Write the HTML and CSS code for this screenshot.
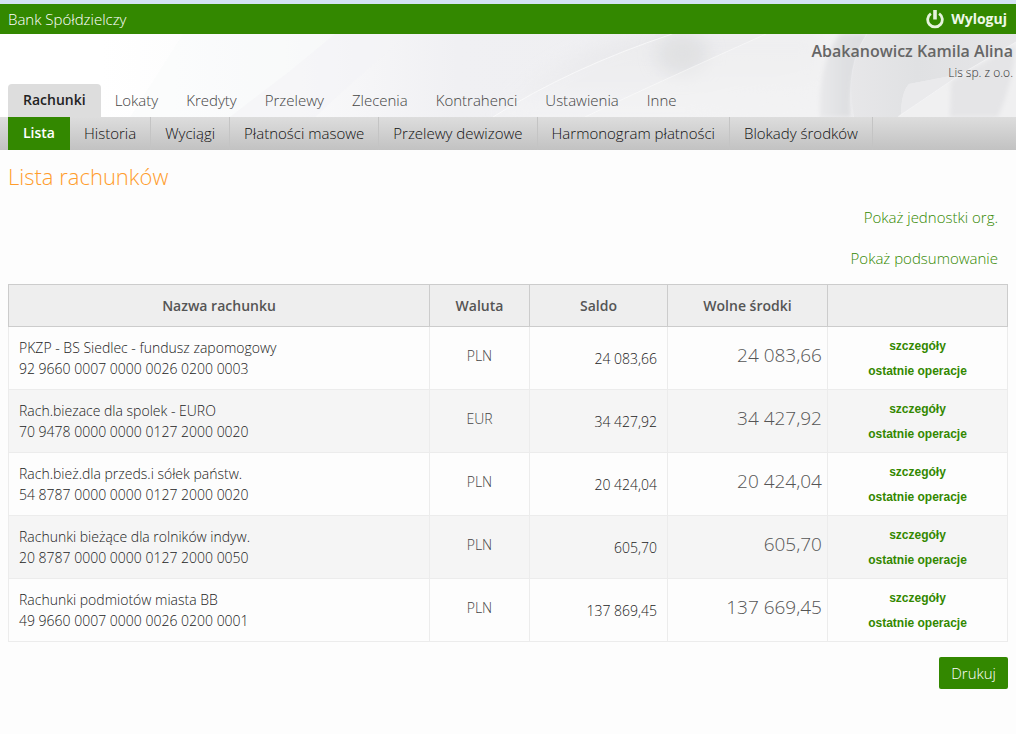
FILE: index.html
```html
<!DOCTYPE html>
<html lang="pl">
<head>
<meta charset="utf-8">
<title>Lista rachunków</title>
<link rel="stylesheet" href="styles.css">
</head>
<body>
<div class="topbar">
  <span class="bank">Bank Spółdzielczy</span>
  <a class="logout" href="#">
    <svg class="power" viewBox="0 0 18 19" aria-hidden="true"><path d="M4.900 3.600A7.300 7.300 0 1 0 13.100 3.600" fill="none" stroke="#e6f3dd" stroke-width="2.800"/><path d="M9 0V9.500" stroke="#e6f3dd" stroke-width="3.600"/></svg>
    <span>Wyloguj</span>
  </a>
</div>
<header class="header">
  <svg class="art" viewBox="0 0 1016 83" preserveAspectRatio="none" aria-hidden="true">
    <defs>
      <linearGradient id="base" x1="0" x2="1" y1="0" y2="0"><stop offset="0" stop-color="#fff"/><stop offset=".1" stop-color="#fff"/><stop offset=".28" stop-color="#fafafb"/><stop offset=".45" stop-color="#f0f0f3"/><stop offset=".7" stop-color="#efeff1"/><stop offset="1" stop-color="#eeeef0"/></linearGradient>
      <linearGradient id="fade" x1="0" x2="0" y1="0" y2="1"><stop offset="0" stop-color="#e2e2e5"/><stop offset="1" stop-color="#f2f2f4"/></linearGradient>
      <linearGradient id="finger" x1="0" x2="1" y1="0" y2="0"><stop offset="0" stop-color="#e9e9eb"/><stop offset=".5" stop-color="#dfe0e2"/><stop offset="1" stop-color="#dbdcdf"/></linearGradient>
      <linearGradient id="hand" x1="0" x2="1" y1="0" y2="0"><stop offset="0" stop-color="#e7e7e9"/><stop offset=".4" stop-color="#e0e1e3"/><stop offset="1" stop-color="#e6e6e8"/></linearGradient>
      <filter id="soft" x="-60%" y="-60%" width="220%" height="220%"><feGaussianBlur stdDeviation="9"/></filter>
      <filter id="edge" x="-20%" y="-20%" width="140%" height="140%"><feGaussianBlur stdDeviation="2"/></filter>
    </defs>
    <rect width="1016" height="83" fill="url(#base)"/>
    <path d="M183 0H335L290 37 250 83H130Z" fill="#f8f9fa" opacity=".4"/>
    <path d="M335 0H408L342 58 315 83H230L290 37Z" fill="#f3f4f7" opacity=".6"/>
    <path d="M530 50Q600 0 670 0H820V55L700 83H500Z" fill="url(#fade)" filter="url(#soft)" opacity=".6"/>
    <ellipse cx="682" cy="20" rx="26" ry="22" fill="#d6d7d9" filter="url(#soft)" opacity=".7"/>
    <path d="M493 83Q570 34 672 0H766Q650 52 585 83Z" fill="#fff" opacity=".15"/>
    <path d="M493 83Q570 34 672 0" fill="none" stroke="#fff" opacity=".6"/>
    <path d="M585 83Q650 52 766 0H845L820 83Z" fill="#f5f5f6" opacity=".5"/>
    <path d="M585 83Q650 52 766 0" fill="none" stroke="#fff" opacity=".5"/>
    <path d="M840 0H868Q848 38 851 83H820C819 55 822 23 840 0Z" fill="url(#finger)" filter="url(#edge)"/>
    <path d="M867 0H1016V8L961 40 909 50Q901 58 901 83H854Q845 31 867 0Z" fill="url(#hand)"/>
    <path d="M909 50 961 40 898 82H901Q901 58 909 50Z" fill="#eaeaec"/>
    <path d="M867 0Q846 30 852 83" fill="none" stroke="#ebebed" opacity=".8"/>
    <path d="M898 83 961 40 1016 8V83Z" fill="#f0f0f1"/>
    <path d="M951 47 1016 10Q1013 50 998 83H950Z" fill="#e5e5e7" filter="url(#edge)"/>
    <path d="M898 83 961 40 1016 8" fill="none" stroke="#f5f5f6" opacity=".6"/>
  </svg>
  <div class="user">
    <strong class="name">Abakanowicz Kamila Alina</strong>
    <span class="firm">Lis sp. z o.o.</span>
  </div>
  <nav class="tabs" aria-label="Menu główne">
    <a class="tab active" href="#">Rachunki</a>
    <a class="tab" href="#">Lokaty</a>
    <a class="tab" href="#">Kredyty</a>
    <a class="tab" href="#">Przelewy</a>
    <a class="tab" href="#">Zlecenia</a>
    <a class="tab" href="#">Kontrahenci</a>
    <a class="tab" href="#">Ustawienia</a>
    <a class="tab" href="#">Inne</a>
  </nav>
</header>
<nav class="subnav" aria-label="Rachunki">
  <a class="sub current" href="#">Lista</a>
  <a class="sub" href="#">Historia</a>
  <a class="sub" href="#">Wyciągi</a>
  <a class="sub" href="#">Płatności masowe</a>
  <a class="sub" href="#">Przelewy dewizowe</a>
  <a class="sub" href="#">Harmonogram płatności</a>
  <a class="sub" href="#">Blokady środków</a>
</nav>
<main class="content">
  <h1 class="title">Lista rachunków</h1>
  <div class="toggles">
    <a class="toggle" href="#">Pokaż jednostki org.</a>
    <a class="toggle" href="#">Pokaż podsumowanie</a>
  </div>
  <table class="accounts">
    <colgroup><col class="c-name"><col class="c-currency"><col class="c-balance"><col class="c-free"><col class="c-links"></colgroup>
    <thead>
      <tr><th scope="col">Nazwa rachunku</th><th scope="col">Waluta</th><th scope="col">Saldo</th><th scope="col">Wolne środki</th><th></th></tr>
    </thead>
    <tbody>
      <tr>
        <td class="account">PKZP - BS Siedlec - fundusz zapomogowy<br>92 9660 0007 0000 0026 0200 0003</td>
        <td class="currency">PLN</td><td class="balance">24 083,66</td><td class="free">24 083,66</td>
        <td class="links"><a href="#">szczegóły</a><a href="#">ostatnie operacje</a></td>
      </tr>
      <tr>
        <td class="account">Rach.biezace dla spolek - EURO<br>70 9478 0000 0000 0127 2000 0020</td>
        <td class="currency">EUR</td><td class="balance">34 427,92</td><td class="free">34 427,92</td>
        <td class="links"><a href="#">szczegóły</a><a href="#">ostatnie operacje</a></td>
      </tr>
      <tr>
        <td class="account">Rach.bież.dla przeds.i sółek państw.<br>54 8787 0000 0000 0127 2000 0020</td>
        <td class="currency">PLN</td><td class="balance">20 424,04</td><td class="free">20 424,04</td>
        <td class="links"><a href="#">szczegóły</a><a href="#">ostatnie operacje</a></td>
      </tr>
      <tr>
        <td class="account">Rachunki bieżące dla rolników indyw.<br>20 8787 0000 0000 0127 2000 0050</td>
        <td class="currency">PLN</td><td class="balance">605,70</td><td class="free">605,70</td>
        <td class="links"><a href="#">szczegóły</a><a href="#">ostatnie operacje</a></td>
      </tr>
      <tr>
        <td class="account">Rachunki podmiotów miasta BB<br>49 9660 0007 0000 0026 0200 0001</td>
        <td class="currency">PLN</td><td class="balance">137 869,45</td><td class="free">137 669,45</td>
        <td class="links"><a href="#">szczegóły</a><a href="#">ostatnie operacje</a></td>
      </tr>
    </tbody>
  </table>
  <div class="actions"><button class="print" type="button">Drukuj</button></div>
</main>
</body>
</html>
```
FILE: styles.css
```css
* { box-sizing: border-box; }
body {
  margin: 0;
  background: #fdfdfd;
  color: #222;
  font: 300 15px/20px "Open Sans", sans-serif;
}
a { text-decoration: none; }

.topbar {
  display: flex;
  justify-content: space-between;
  align-items: center;
  height: 34px;
  padding: 0 9px 0 8px;
  border-top: 4px solid #d5e2f2;
  background: #380;
  color: #fff;
}
.logout {
  display: flex;
  align-items: center;
  gap: 7px;
  color: #eef8e8;
  font-size: 14px;
  font-weight: 700;
}
.power { width: 18px; height: 19px; }

.header {
  position: relative;
  display: flex;
  flex-direction: column;
  justify-content: space-between;
  height: 83px;
}
.art {
  position: absolute;
  inset: 0;
  z-index: -1;
  width: 100%;
  height: 100%;
}
.user {
  display: flex;
  flex-direction: column;
  align-items: flex-end;
  height: 50px;
  padding: 7px 3px 0 0;
  color: #666;
}
.name { font-size: 16px; font-weight: 600; }
.firm { font-size: 12px; font-weight: 300; line-height: 24px; color: #333; }
.tabs { display: flex; padding-left: 8px; }
.tab {
  padding: 6px 14px 7px;
  border-radius: 4px 4px 0 0;
  color: #444;
}
.tab.active {
  padding: 6px 15px 7px;
  background: #ddd;
  color: #222;
  font-size: 14px;
  font-weight: 600;
}

.subnav {
  display: flex;
  padding-left: 8px;
  background: linear-gradient(#ddd, #c2c2c2);
}
.sub {
  padding: 6px 14px 7px;
  border-right: 1px solid #c4c4c4;
  color: #111;
}
.sub.current {
  padding: 6px 15px 7px;
  border: 0;
  background: #380;
  color: #fff;
  font-size: 14px;
  font-weight: 600;
}

.content { padding: 11px 8px 45px; }
.title {
  margin: 0;
  color: #ff9c2c;
  font-size: 22px;
  font-weight: 300;
  line-height: 30px;
}
.toggles {
  display: flex;
  flex-direction: column;
  align-items: flex-end;
  gap: 21px;
  padding: 16px 10px;
}
.toggle { color: #380; }

.accounts {
  width: 100%;
  border-collapse: collapse;
  table-layout: fixed;
  font-size: 14px;
}
.c-name { width: 42.1%; }
.c-currency { width: 10%; }
.c-balance { width: 13.8%; }
.c-free { width: 16%; }
.c-links { width: 18%; }
.accounts th {
  height: 42px;
  padding: 0;
  border: 1px solid #ccc;
  background: #eee;
  color: #555;
  font-weight: 600;
}
.accounts td {
  height: 63px;
  padding: 0 10px;
  border: 1px solid #ececec;
}
.accounts tbody tr:nth-child(even) { background: #f5f5f5; }
.account { line-height: 21px; }
.accounts .currency { padding-bottom: 4px; color: #444; text-align: center; }
.accounts .balance { padding-top: 2px; text-align: right; }
.accounts .free {
  padding: 0 5px 6px 0;
  color: #555;
  font-size: 19px;
  text-align: right;
}
.accounts .links { padding-top: 2px; }
.links a {
  display: block;
  color: #380;
  font: 700 12px/25px "Liberation Sans", Arial, sans-serif;
  text-align: center;
}
.actions { display: flex; justify-content: flex-end; padding-top: 15px; }
.print {
  height: 32px;
  padding: 0 12px;
  border: 0;
  border-radius: 2px;
  background: #380;
  color: #fff;
  font: inherit;
}
```
